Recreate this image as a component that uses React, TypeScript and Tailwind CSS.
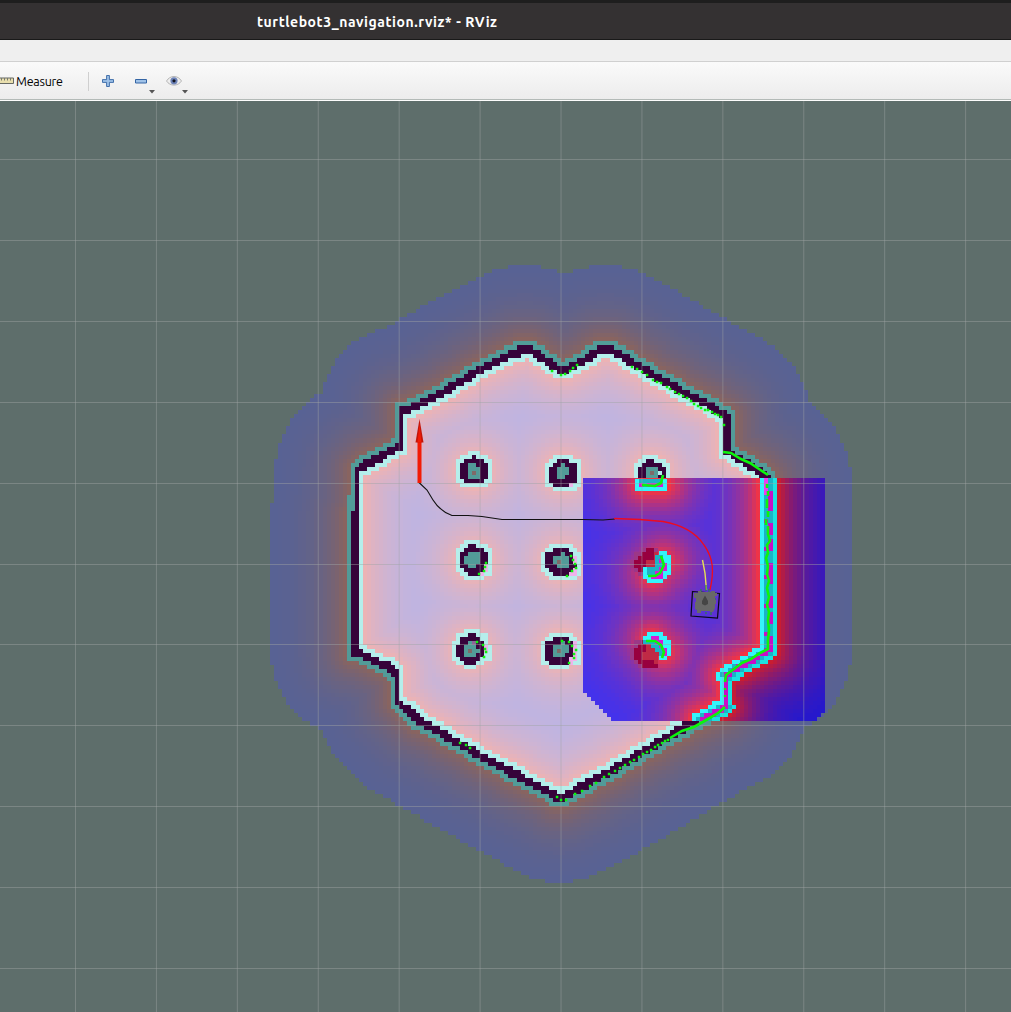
import React from "react";

type Pt = [number, number];

const PITCH = 4.043;
const OX = 274 - PITCH * 2;
const OY = 337.4 - PITCH * 20;
const COLS = 148;
const ROWS = 156;
const RADIUS = 20.1;

const WALL: Pt[] = [
  [526.7, 347.5], [480, 370], [440, 394], [402, 412], [401.4, 418], [401.4, 446], [357, 469],
  [356.9, 474], [356.9, 512], [355, 514], [355, 652], [394, 669], [397.3, 676], [397.3, 702],
  [420, 721], [480, 755], [560, 799], [600, 777], [640, 753], [683, 728], [725, 706],
  [725, 675], [768, 652], [768, 477], [727, 451], [727, 416], [682, 391], [640, 367],
  [610, 349.5], [601, 349.5], [580, 363], [563, 371],
];

// Segments of the outline that are a single cell thick.
const THIN = new Set([4, 7, 12]);

interface Sprite { x: number; y: number; rows: string[] }

const PILLARS: Sprite[] = [
  { x: 456, y: 451, rows: ["...CCC...", ".CCCDCCC.", "CCDDDDDCC", "CDDTTDDDC", "CDDTTTDDC", "CDDTMTDDC", "CDDTTTDDC", "CCDDDDDCC", ".CCCCCCC."] },
  { x: 545, y: 455, rows: ["..CCCCC..", ".CCDDDCCC", "CCDDTDDDC", "CDDTTTDDC", "CDDTTTDDC", "CDDTTDDDC", "CDDDDDDDC", "CCDDDDPCC", "..CCCCCC."] },
  { x: 634, y: 455, rows: ["..CCCC...", ".CCDDCCC.", "CCDDDDDCC", "CDDTTTDDC", "CDDTMTCDC", "CDDTTTDDC"] },
  { x: 456, y: 540, rows: ["..CCCC...", ".CCDDCCC.", "CCDDDDDCC", "CDDTTTDDC", "CDTTTTDDC", "CDTTTTDDC", "CDDTTDDPC", "CCDDDDDPC", ".CCDDDPCC", "..CCCCC.."] },
  { x: 541, y: 544, rows: ["..CCCCCC..", ".CCDDDDCC.", "CDDDDTDDCC", "CDDTTTTDPC", "CDDTMTTDPC", "CDDDTTTDDC", "CCDDDDDDPC", ".CCDDDDPPC", "..CCCCCCC."] },
  { x: 452, y: 629, rows: ["...CCCC...", ".CCCDDCCC.", ".CDDDDDCC.", "CCDDTVDDC.", "CDDTTTDDPC", "CDDTMTTDPC", "CDDTTTDDCC", "CCDDDDDCCC", ".CCDDDCC..", "...CCC...."] },
  { x: 541, y: 633, rows: ["..CCCCCC..", ".CCDDDDCC.", "CDDDDTDDPC", "CDDTTTTDPC", "CDDTMTTDPC", "CDDTTTDDPC", "CDDDDDDPPC", "CCDDDDDPCC", "..CCCCC..."] },
];

const LOCAL_PILLARS: Sprite[] = [
  { x: 635, y: 479, rows: ["cqqqqqqc", "cmqmmmmc", "cccccccc"] },
  { x: 630, y: 548, rows: ["...vrrv", ".vvrrrs", ".vrrrrs", "vrrrsss", "vrrrsss", ".vrrsss", "..vvs.."] },
  { x: 643, y: 551, rows: ["....cc.", "...qqcc", "...qmcc", "...qqmc", "cqqqmmc", "cqqmmcc", "ccmmmc.", ".cccc.."] },
  { x: 630, y: 640, rows: [".vvrv...", ".vrrss..", "vrrrsss.", "vrrsssss", "vrrssss.", ".vrrrrs.", "..vrrrr."] },
  { x: 643, y: 632, rows: [".cccc..", "ccmmcc.", "qqqmmcc", "..qqmcc", "...qqmc", "....qmc", "....cc."] },
];

const CELL_COLOR: Record<string, string> = {
  C: "#b5eeeb", D: "#36033a", T: "#529b98", M: "#7f6a68", P: "#efb3ea", V: "#8d6399",
  c: "#35f4fb", q: "#1cb3c6", m: "#d818d6", r: "#98003f", s: "#c02a45", v: "#9c3787",
};

function segDist(px: number, py: number, a: Pt, b: Pt) {
  const dx = b[0] - a[0];
  const dy = b[1] - a[1];
  const t = Math.max(0, Math.min(1, ((px - a[0]) * dx + (py - a[1]) * dy) / (dx * dx + dy * dy)));
  return Math.hypot(px - a[0] - t * dx, py - a[1] - t * dy);
}

function inside(px: number, py: number, poly: Pt[]) {
  let r = false;
  for (let i = 0, j = poly.length - 1; i < poly.length; j = i++) {
    const [xi, yi] = poly[i];
    const [xj, yj] = poly[j];
    if (yi > py !== yj > py && px < ((xj - xi) * (py - yi)) / (yj - yi) + xi) r = !r;
  }
  return r;
}

function mix(a: number[], b: number[], t: number) {
  const q = Math.round(Math.min(1, t) * 48) / 48;
  return "rgb(" + a.map((v, i) => Math.round(v + (b[i] - v) * q)).join(",") + ")";
}

type Layer = Map<string, string>;

function put(layer: Layer, color: string, x0: number, y0: number, x1: number, y1: number) {
  const a = Math.round(x0), b = Math.round(y0), c = Math.round(x1), d = Math.round(y1);
  layer.set(color, (layer.get(color) ?? "") + `M${a} ${b}H${c}V${d}H${a}z`);
}

function buildSprites(sprites: Sprite[]): Layer[] {
  return sprites.map((s) => {
    const layer: Layer = new Map();
    s.rows.forEach((row, j) =>
      [...row].forEach((ch, i) => {
        if (ch !== ".")
          put(layer, CELL_COLOR[ch], s.x + i * PITCH, s.y + j * PITCH, s.x + (i + 1) * PITCH, s.y + (j + 1) * PITCH);
      }),
    );
    return layer;
  });
}

function buildGlobal(): Layer {
  const layer: Layer = new Map();
  const dark: Pt[] = [];
  const n = WALL.length;
  for (let j = 0; j < ROWS; j++)
    for (let i = 0; i < COLS; i++) {
      const x = OX + (i + 0.5) * PITCH;
      const y = OY + (j + 0.5) * PITCH;
      for (let k = 0; k < n; k++)
        if (segDist(x, y, WALL[k], WALL[(k + 1) % n]) < (THIN.has(k) ? 2 : 3.8)) {
          dark.push([i, j]);
          break;
        }
    }
  const pillars: Pt[] = [
    [474, 471], [563, 472], [652, 472],
    [474, 561], [561, 562], [652, 561],
    [471, 650], [561, 650], [652, 650],
  ];
  for (let j = 0; j < ROWS; j++)
    for (let i = 0; i < COLS; i++) {
      const x = OX + (i + 0.5) * PITCH;
      const y = OY + (j + 0.5) * PITCH;
      let d2 = 1e9;
      for (const [a, b] of dark) {
        const v = (a - i) * (a - i) + (b - j) * (b - j);
        if (v < d2) d2 = v;
      }
      const inn = inside(x, y, WALL);
      let color: string;
      if (d2 === 0) color = CELL_COLOR.D;
      else if (d2 <= 2) color = inn ? CELL_COLOR.C : CELL_COLOR.T;
      else {
        let d = Math.sqrt(d2);
        if (inn) for (const p of pillars) d = Math.min(d, Math.max(1.6, Math.hypot(p[0] - x, p[1] - y) / PITCH - 2.6));
        if (!inn && d > RADIUS) continue;
        const t = Math.exp(-(d - 1.6) / 6.6);
        color = inn ? mix([184, 180, 232], [239, 179, 178], t) : mix([84, 98, 152], [140, 100, 92], t);
      }
      put(layer, color, x - PITCH / 2, y - PITCH / 2, x + PITCH / 2, y + PITCH / 2);
    }
  return layer;
}

const LOCAL_WALL: Pt[] = [[768.5, 474], [768.5, 652], [726, 676], [726, 706], [700, 720]];

function buildLocal(): Layer {
  const layer: Layer = new Map();
  const x0 = 582.5;
  const y0 = 478.4;
  for (let j = 0; j < 60; j++)
    for (let i = 0; i < 60; i++) {
      const x = x0 + (i + 0.5) * PITCH;
      const y = y0 + (j + 0.5) * PITCH;
      if (x - 583 + (720 - y) < 28 || 825 - x + (720 - y) < 10) continue;
      let dw = 1e9;
      for (let k = 0; k < LOCAL_WALL.length - 1; k++)
        dw = Math.min(dw, segDist(x, y, LOCAL_WALL[k], LOCAL_WALL[k + 1]) * (k === 2 ? 1.35 : 1));
      const out = !inside(x, y, WALL);
      let color: string;
      if (dw < 2.4) {
        const straight = y < 648;
        const magenta = !straight || (x < 768.5 ? j < 4 || j % 7 === 3 : j % 6 !== 2 && j % 9 > 1);
        color = magenta ? (x < 768 && j < 5 ? "#f13cf0" : "#c80fc6") : "#1cb3c6";
      } else if (dw < 4.4) color = "#1cb3c6";
      else if (dw < 8.6) color = out ? "#1ce2e0" : CELL_COLOR.c;
      else {
        let d = dw - 4;
        d = Math.min(d, segDist(x, y, [643, 485], [664, 485]) - 1);
        d = Math.min(d, segDist(x, y, [653, 574], [663, 562]) - 2);
        d = Math.min(d, segDist(x, y, [652, 640], [663, 652]) - 2);
        const t = Math.exp(-Math.max(0, d - 5) / 27);
        color = out ? mix([24, 24, 218], [208, 29, 42], t) : mix([56, 50, 246], [246, 52, 64], t);
      }
      put(layer, color, x - PITCH / 2, y - PITCH / 2, x + PITCH / 2, y + PITCH / 2);
    }
  return layer;
}

const LAYERS: Layer[] = [buildGlobal(), ...buildSprites(PILLARS), buildLocal(), ...buildSprites(LOCAL_PILLARS)];

const SCAN_SPARSE =
  "M552 371h.1M561 375h.1M565 374h.1M570 371h.1M573 368h.1M577 365h.1M632 367h.1M637 369h.1M642 372h.1M647 375h.1M653 380h.1M657 382h.1M661 383h.1M667 387h.1M670 389h.1M675 392h.1M679 394h.1M683 396h.1M687 398h.1M691 401h.1M694 404h.1M698 406h.1M701 408h.1M705 410h.1M708 410h.1M712 412h.1M715 414h.1M718 415h.1M721 417h.1M724 425h.1M460 743h.1M466 745h.1M470 748h.1M557 797h.1M561 800h.1M566 800h.1M575 794h.1M582 791h.1M590 786h.1M596 783h.1M604 777h.1M609 774h.1M615 771h.1M620 768h.1M625 765h.1M630 762h.1M634 760h.1M639 757h.1M643 754h.1M647 752h.1M651 750h.1M655 747h.1M658 745h.1M662 743h.1M665 741h.1M668 740h.1M486 563h.1M485 567h.1M484 571h.1M479 574h.1M571 556h.1M573 560h.1M575 564h.1M576 568h.1M572 571h.1M567 576h.1M477 642h.1M483 645h.1M485 649h.1M486 652h.1M484 657h.1M562 641h.1M569 642h.1M572 646h.1M576 650h.1M574 654h.1M574 658h.1M569 663h.1";

const SCAN_DENSE = [
  "M723 452L731 453L741 459L750 463L759 469L768 475",
  "M767 484V488M768 491V496M767 499V508M768 511V517M766 519V525",
  "M768 526V534L770 541L767 545L768 553L766 558L768 566L767 574L769 581L767 588L769 597L767 605L769 612L768 620L769 630L768 640V649L760 653L751 659L742 663L734 669L726 675L725 682",
  "M670 738L682 731L694 727L708 719L718 713L725 707",
  "M642 485L655 486L661 483L663 475",
  "M661 556L664 565L660 573L655 576L648 576",
  "M646 641L655 641L661 645L664 652L662 658",
];

function Cells({ layer }: { layer: Layer }) {
  return (
    <g shapeRendering="crispEdges">
      {[...layer].map(([color, d]) => (
        <path key={color} fill={color} d={d} />
      ))}
    </g>
  );
}

function Scene() {
  const v = Array.from({ length: 12 }, (_, i) => 75.5 + i * 80.92);
  const h = Array.from({ length: 11 }, (_, i) => 159.5 + i * 80.88);
  return (
    <svg className="block h-[911px] w-[1011px]" viewBox="0 101 1011 911">
      <rect x="0" y="101" width="1011" height="911" fill="#5e6e6b" />
      {LAYERS.map((layer, i) => (
        <Cells key={i} layer={layer} />
      ))}
      <path d="M351 513h4v4h-4zM351 522h4v4h-4zM351 535h4v4h-4z" fill="#36033a" />
      <path d="M347 495h4v16h-4zM347 518h4v4h-4zM347 527h4v8h-4z" fill="#529b98" />
      <g stroke="#a0a5a4" strokeOpacity="0.45">
        {v.map((x) => (
          <path key={x} d={`M${x} 101V1012`} />
        ))}
        {h.map((y) => (
          <path key={y} d={`M0 ${Math.round(y - 0.3) + 0.5}H1011`} />
        ))}
      </g>
      <g stroke="#0cf50c" fill="none">
        <path d={SCAN_SPARSE} strokeWidth="2.4" strokeLinecap="square" />
        {SCAN_DENSE.map((d) => (
          <path key={d} d={d} strokeWidth="2.6" />
        ))}
        <path d="M725 688v2M725 695v2" strokeWidth="2.4" />
      </g>
      <path
        d="M419 482.500L427 490L433 500C438 508 445 513 452 515.500H468L482 516.500L502 519.500L560 519.500H583L603 520L615 519"
        fill="none" stroke="#111" strokeWidth="1.1"
      />
      <path d="M614 518.500L640 519.500L663 521.500C683 525 696 533 704 545C714 559 714 572 710 590" fill="none" stroke="#ed0b20" strokeWidth="1.3" />
      <path d="M702.500 560L705 573L706.500 590" fill="none" stroke="#e6df55" strokeWidth="1.4" />
      <path d="M417.500 442h4V483h-4z" fill="#f21b05" />
      <path d="M419.500 419L423.500 442.500H415.500z" fill="#c41508" />
      <path d="M419.500 424L421.500 442.500H417.500z" fill="#f21b05" />
      <path d="M692.500 591.500L719.500 593.500L717.500 618L691 616z" fill="none" stroke="#080818" strokeWidth="1.2" />
      <path d="M706 585v6M701 589v3M709 589v3M715 598v3M697 605v5M706 612v2M711 612v3" stroke="#2c8048" strokeWidth="1.2" />
      <path d="M694 593H698V591H701V592H711V591H715V593H717V596H715V600H716V604H715V608L713 612H710V611H701V613H697V610L695 609V602H696V598H694z" fill="#686868" />
      <path d="M705 595.500L708 601V604L705 605.500L702 604V601z" fill="#454545" />
    </svg>
  );
}

function Caret() {
  return (
    <svg className="absolute -right-[6px] top-[15px] h-[4px] w-[6px]" viewBox="0 0 6 4">
      <path d="M0 0h6L3 3.500z" fill="#555" />
    </svg>
  );
}

export default function App() {
  return (
    <div className="flex h-[1012px] w-[1011px] flex-col overflow-hidden bg-[#efefef] font-['Ubuntu','Open_Sans',sans-serif]">
      <header className="h-[40px] shrink-0 border-b border-t-[3px] border-b-[#191919] border-t-[#1e1e1e] bg-[#343132] pl-[257px]">
        <h1 className="whitespace-nowrap text-[14px] font-bold leading-[38px] tracking-[0.56px] text-white">turtlebot3_navigation.rviz* - RViz</h1>
      </header>
      <div className="h-[22px] shrink-0 border-b border-[#d0d0d0] bg-[#efefef]" />
      <div className="flex h-[39px] shrink-0 items-center border-b border-[#fdfdfd] bg-linear-to-b from-[#fafafa] to-[#ececec] shadow-[inset_0_-1px_0_#b3bab7]">
        <svg className="h-[8px] w-[14px]" viewBox="0 0 14 8">
          <path d="M-1 1h14.500v5.500H-1z" fill="#e9dfae" stroke="#666963" />
          <path d="M1.500 1v2.500M4.500 1v2.500M7.500 1v2.500M10.500 1v2.500" stroke="#777a70" />
        </svg>
        <span className="ml-[2px] w-[72px] text-[12.500px] tracking-[-0.23px] text-black">Measure</span>
        <span className="h-[19px] w-px bg-[#cfcfcf]" />
        <svg className="ml-[13px] h-[12px] w-[12px]" viewBox="0 0 13 13">
          <path d="M5 .5h3V5h4.500v3H8v4.500H5V8H.5V5H5z" fill="#9fc2e8" stroke="#3465a4" />
        </svg>
        <div className="relative ml-[21px] flex h-[13px] w-[14px] items-center">
          <svg className="h-[5px] w-[12px]" viewBox="0 0 12 5">
            <path d="M.5 .5h11v3.500H.5z" fill="#9fc2e8" stroke="#3465a4" />
          </svg>
          <Caret />
        </div>
        <div className="relative ml-[17px] flex h-[13px] w-[16px] items-center">
          <svg className="h-[12px] w-[16px]" viewBox="0 0 16 12">
            <path d="M.5 6C4 0 12 0 15.500 6C12 11.500 4 11.500 .5 6z" fill="#eee" stroke="#b5b5b5" />
            <circle cx="8" cy="5.800" r="3.600" fill="#6d83b8" />
            <circle cx="8" cy="5.800" r="1.600" fill="#10131f" />
          </svg>
          <Caret />
        </div>
      </div>
      <Scene />
    </div>
  );
}
